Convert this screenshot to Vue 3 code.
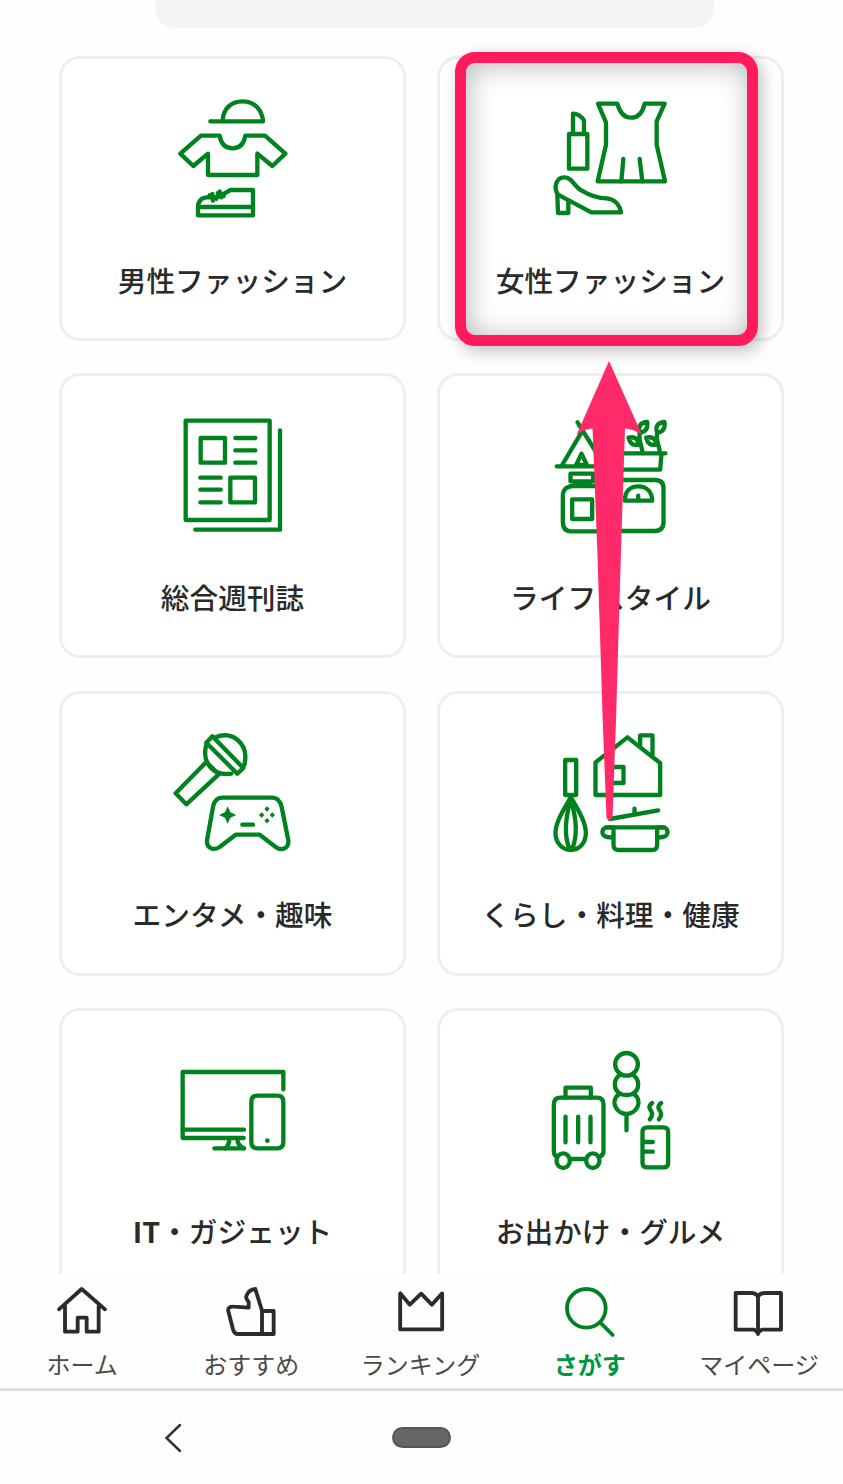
<script setup>

// カテゴリ検索画面
// paths: 線で描くアイコン, fills: 塗りつぶす部分

import {ref} from 'vue'


const categories = [
    {
        name: '男性ファッション',
        box: '-5 1 450 450',
        paths: [
            'M152 110H310C308 75 284 50 248 50S190 75 189 108',
            'M124 153H180C184 178 198 191 219 191S253 178 257 153H316L377 207L338 244L293 207V271H145V207L101 244L62 207Z',
            'M115 392V368C115 350 125 340 140 338H166C184 334 198 324 212 316H280V392Z',
            'M117 367H280',
            'M150 332L170 342M158 328L160 348M174 326L192 334M180 320L184 338',
        ],
    },
    {
        name: '女性ファッション',
        box: '289 136 450 450',
        paths: [
            'M388 283H443V387H388Z',
            'M400 283V222C415 222 427 233 433 242V283',
            'M475 192H533C540 218 552 234 574 234S609 218 615 192H675L651 245V315L676 425H474L499 315V248Z',
            'M551 358L545 425M600 358L608 425',
            'M355 465C340 442 350 413 374 413C398 413 402 440 425 452C450 467 470 476 500 476C525 478 540 495 544 518H455Z',
            'M353 465L355 520H386V483',
        ],
    },
    {
        name: '総合週刊誌',
        box: '-5 8 450 450',
        paths: [
            'M78 64H330V362H78Z',
            'M361 93V391H107',
            'M123 116H196V190H123Z',
            'M227 116H287M227 153H287M227 190H287',
            'M122 235H183M122 271H183M122 309H183',
            'M212 235H286V309H212Z',
        ],
    },
    {
        name: 'ライフスタイル',
        box: '3.5 157 450 450',
        paths: [
            'M66 350H215M82 346L152 228M128 218L208 346',
            'M124 346L140 312L156 346Z',
            'M107 372H175V395H107ZM120 406H165',
            'M180 409H112C92 412 84 420 84 440V515C84 535 92 545 108 545H200V409',
            'M112 449H172V508H112Z',
            'M255 311H392M380 311L376 360H255',
            'M323 308C320 285 310 272 315 248M375 308C373 285 362 272 367 248',
            'M315 249C308 230 318 218 337 217C340 236 332 248 315 249Z',
            'M367 249C360 230 370 218 389 217C392 236 384 248 367 249Z',
            'M312 284C294 290 285 280 281 264C298 260 310 267 312 284Z',
            'M365 284C347 290 338 280 334 264C351 260 363 267 365 284Z',
            'M230 391H360C378 391 386 400 386 415V518C386 535 378 544 360 544H230Z',
            'M270 453C270 425 285 410 311 410S352 428 352 453Z',
            'M310 452V438',
        ],
    },
    {
        name: 'エンタメ・趣味',
        box: '-5 1 450 450',
        paths: [
            'M158 50L251 145L233 162L140 69Z',
            'M170 52C215 32 270 70 254 136',
            'M139 78C128 125 155 170 215 162',
            'M140 127L48 221L80 254L177 164Z',
            'M188 234H338C355 234 362 245 366 262L386 362C388 388 364 394 348 382L300 345H228L180 382C160 394 140 386 142 362L160 262C163 245 172 234 188 234Z',
            'M248 315H280',
        ],
        fills: [
            'M204 260L212 278L230 286L212 294L204 312L196 294L178 286L196 278Z',
            'M322 260l8 8-8 8-8-8ZM322 295l8 8-8 8-8-8ZM306 278l8 8-8 8-8-8ZM338 278l8 8-8 8-8-8Z',
        ],
    },
    {
        name: 'くらし・料理・健康',
        box: '3.500 1 450 450',
        paths: [
            'M91 121H124V226H91Z',
            'M108 232C90 265 62 305 62 340C62 372 85 391 108 391S153 372 153 340C153 305 126 265 108 232Z',
            'M108 240C90 300 88 350 104 388M108 240C126 300 128 350 112 388',
            'M182 128V226H376V130L278 53Z',
            'M316 78V47H353V105',
            'M222 142H266V190H222Z',
            'M225 298L370 272M299 283V267',
            'M215 323H388M236 323V375Q236 391 252 391H351Q367 391 367 375V323',
            'M234 323H217C199 323 197 350 217 352L234 354M369 323H384C402 323 404 350 384 352L369 354',
        ],
    },
    {
        name: 'ガジェット',
        latin: 'IT',
        box: '-6 -9 450 450',
        paths: [
            'M251 294H68V96H370V148',
            'M68 269H252M163 325H252',
            'M208 296C208 310 204 318 196 325M232 296C232 312 240 320 252 325',
            'M292 167H352Q370 167 370 185V307Q370 325 352 325H292Q274 325 274 307V185Q274 167 292 167Z',
        ],
        fills: ['M315 302a7 7 0 1 0 14 0a7 7 0 1 0-14 0Z'],
    },
    {
        name: 'お出かけ・グルメ',
        box: '3.500 -9 450 450',
        paths: [
            'M66 350Q57 346 57 332V193Q57 173 77 173H186Q206 173 206 193V332Q206 346 195 350',
            'M92 173V143H168V173',
            'M92 230V307M130 230V307M167 230V307M107 357H152',
            'M65 362a20 22 0 1 0 40 0a20 22 0 1 0-40 0ZM154 362a20 22 0 1 0 40 0a20 22 0 1 0-40 0Z',
            'M241 73a34 34 0 1 0 68 0a34 34 0 1 0-68 0Z',
            'M255 105C235 118 235 148 255 161Q275 169 295 161C315 148 315 118 295 105',
            'M255 161C222 182 245 222 275 222S328 182 295 161M275 222V271',
            'M337 262H386Q400 262 400 276V368Q400 382 386 382H337Q323 382 323 368V276Q323 262 337 262Z',
            'M325 306H354M325 335H354',
            'M352 189C338 200 345 208 349 213C354 222 352 230 345 238M379 189C365 200 372 208 376 213C381 222 379 230 372 238',
        ],
    },
]

const tabs = [
    {
        name: 'ホーム',
        box: '159 66 180 180',
        path: 'M180 148L248 87L318 148M198 138V215H236V173H263V215H299V138',
    },
    {
        name: 'おすすめ',
        box: '667 66 180 180',
        path: 'M689 154C686 143 695 139 705 140L750 143V126C742 118 741 112 744 106C748 95 756 88 770 87L790 152V222H718C710 222 706 218 703 208ZM790 153H825V222H790',
    },
    {
        name: 'ランキング',
        box: '1174.5 66 180 180',
        path: 'M1202 100V208H1328V100L1297 134L1265 101L1231 134Z',
    },
    {
        name: 'さがす',
        box: '419 66 180 180',
        path: 'M440 145a58 58 0 1 0 116 0a58 58 0 1 0-116 0ZM540 188L577 225',
    },
    {
        name: 'マイページ',
        box: '927 66 180 180',
        path: 'M1014 110C1010 102 1003 99 994 99H947V209H1003L1014 218L1025 209H1083V99H1035C1025 99 1018 102 1014 110V222',
    },
]

const active = ref('さがす')

</script>

<template>
    <div class="screen">
        <div class="search_bar"></div>

        <main class="category_list">
            <div v-for="item in categories" :key="item.name" class="category_card">
                <svg class="category_icon" :viewBox="item.box">
                    <path v-for="d in item.paths" :key="d" :d="d" />
                    <path v-for="d in item.fills" :key="d" class="solid" :d="d" />
                </svg>
                <div class="category_name"><template v-if="item.latin"><b>{{ item.latin }}</b>・</template>{{ item.name }}</div>
            </div>
        </main>

        <nav class="tab_bar">
            <div v-for="tab in tabs" :key="tab.name" class="tab" :class="{active: tab.name === active}" @click="active = tab.name">
                <svg class="tab_icon" :viewBox="tab.box"><path :d="tab.path" /></svg>
                <span class="tab_name">{{ tab.name }}</span>
            </div>
        </nav>

        <footer class="system_bar">
            <svg class="back" viewBox="0 0 18 30"><path d="M16 2L2.500 15L16 28" /></svg>
            <div class="home_pill"></div>
        </footer>

        <!-- 操作説明の枠と矢印 -->
        <div class="highlight"></div>
        <svg class="arrow" viewBox="570 355 80 470">
            <path d="M609 361L642 435Q634 429 625 428.500L621 550L616 720L612.500 818Q610 823 606.500 818L602.700 720L597.300 550L592.500 428.500Q584 429 576.500 435Z" />
        </svg>
    </div>
</template>

<style>
body{
    margin: 0;
    background: #fefefe;
}
</style>

<style scoped>

.screen{
    position: relative;
    display: flex;
    flex-direction: column;
    width: 843px;
    height: 1484px;
    overflow: hidden;
    background: #fefefe;
    font-family: "Noto Sans CJK JP", sans-serif;
}

.search_bar{
    flex: none;
    width: 559px;
    height: 28px;
    margin-left: 155px;
    border-radius: 0 0 20px 20px;
    background: #f4f4f4;
}

.category_list{
    flex: 1;
    min-height: 0;
    overflow: hidden;
    display: grid;
    grid-template-columns: 347px 347px;
    grid-auto-rows: 285px;
    gap: 32.3px 31px;
    padding: 28px 0 0 59px;
}

.category_card{
    box-sizing: border-box;
    display: flex;
    flex-direction: column;
    align-items: center;
    padding-top: 26px;
    border: 3px solid #eeeeee;
    border-radius: 21px;
    background: #fff;
}

.category_icon{
    flex: none;
    width: 150px;
    height: 150px;
    fill: none;
    stroke: #00821f;
    stroke-width: 13;
    stroke-linecap: round;
    stroke-linejoin: round;
}

.category_icon .solid{
    fill: #00821f;
    stroke: none;
}

.category_name{
    margin-top: 24.5px;
    font-size: 28.7px;
    line-height: 40px;
    font-weight: 500;
    color: #2a2a2a;
    white-space: nowrap;
}

.category_name b{
    font-weight: 700;
}

.tab_bar{
    flex: none;
    display: flex;
    box-sizing: border-box;
    height: 117px;
    margin: 0 -0.5px 0 -2.5px;
    padding-top: 8px;
    border-bottom: 3px solid #dedede;
}

.tab{
    flex: 1;
    display: flex;
    flex-direction: column;
    align-items: center;
    color: #4a4a4a;
    stroke: #2b2b2b;
}

.tab_icon{
    width: 60px;
    height: 60px;
    fill: none;
    stroke-width: 11.5;
    stroke-linecap: round;
    stroke-linejoin: round;
}

.tab_name{
    margin-top: 6px;
    font-size: 24px;
    line-height: 32px;
    stroke: none;
    white-space: nowrap;
}

.tab.active{
    color: #00953f;
    stroke: #00821f;
}

.tab.active .tab_name{
    font-weight: 700;
}

.system_bar{
    flex: none;
    display: flex;
    align-items: center;
    height: 93px;
    padding-left: 164px;
}

.back{
    width: 18px;
    height: 30px;
    fill: none;
    stroke: #333;
    stroke-width: 2.5;
    stroke-linecap: round;
}

.home_pill{
    box-sizing: border-box;
    width: 59px;
    height: 21px;
    margin-left: 210px;
    border: 2px solid #565656;
    border-radius: 11px;
    background: #666;
}

.highlight{
    position: absolute;
    left: 455px;
    top: 52px;
    box-sizing: border-box;
    width: 303px;
    height: 294px;
    border: 11px solid #ff1a5e;
    border-radius: 20px;
    box-shadow: 4px 5px 16px rgba(0,0,0,0.25), inset 2px 2px 28px rgba(0,0,0,0.28);
}

.arrow{
    position: absolute;
    left: 570px;
    top: 355px;
    width: 80px;
    height: 470px;
    fill: #ff2a69;
}

</style>
